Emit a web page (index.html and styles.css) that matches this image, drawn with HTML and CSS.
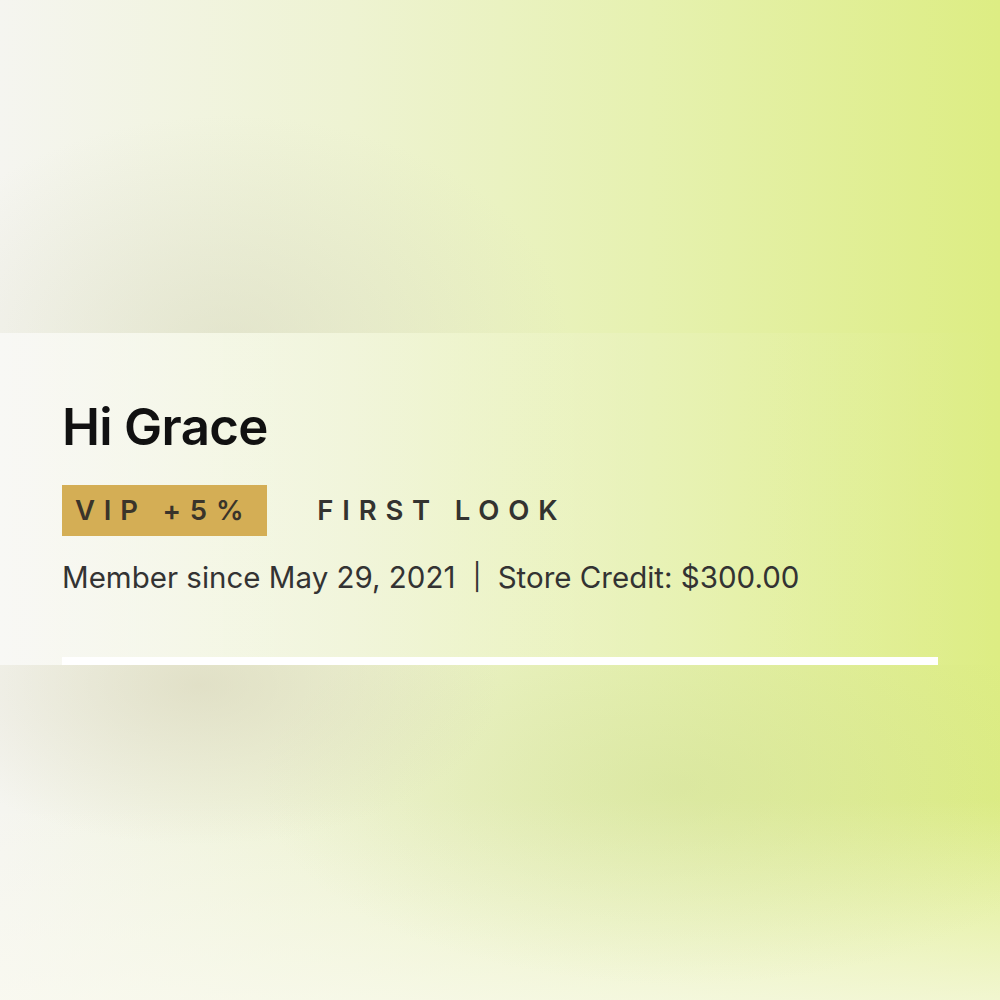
FILE: index.html
```html
<!DOCTYPE html>
<html lang="en">
<head>
<meta charset="utf-8">
<title>Account</title>
<link rel="stylesheet" href="styles.css">
</head>
<body>
<div class="page">
  <div class="backdrop-top"></div>
  <section class="panel">
    <div class="panel-inner">
      <h1 class="greeting">Hi Grace</h1>
      <div class="tags">
        <span class="tag tag-vip">VIP +5%</span>
        <span class="tag">FIRST LOOK</span>
      </div>
      <p class="meta">Member since May 29, 2021 <span class="sep">|</span> Store Credit: $300.00</p>
    </div>
  </section>
  <div class="backdrop-bottom"></div>
</div>
</body>
</html>
```

FILE: styles.css
```css
html, body {
  margin: 0;
  padding: 0;
}

body {
  font-family: Inter, "Liberation Sans", Arial, sans-serif;
}

.page {
  width: 1000px;
  height: 1000px;
  display: flex;
  flex-direction: column;
  background: linear-gradient(90deg, #f5f5f0 0%, #eef3d2 35%, #e6f1b0 65%, #dded83 100%);
  overflow: hidden;
}

.backdrop-top {
  height: 333px;
  flex: none;
  background:
    radial-gradient(ellipse 340px 230px at 230px 345px, rgba(208, 208, 182, 0.42), rgba(208, 208, 182, 0) 100%);
}

.panel {
  height: 332px;
  flex: none;
  padding: 0 62px;
  box-sizing: border-box;
  background: linear-gradient(90deg, rgba(255, 255, 255, 0.35) 0%, rgba(255, 255, 255, 0.15) 45%, rgba(255, 255, 255, 0) 100%);
}

.panel-inner {
  height: 100%;
  box-sizing: border-box;
  padding-top: 64px;
  border-bottom: 8px solid #ffffff;
  display: flex;
  flex-direction: column;
}

.greeting {
  margin: 0;
  font-size: 51px;
  line-height: 60px;
  font-weight: 600;
  color: #111111;
  letter-spacing: -0.7px;
}

.tags {
  margin-top: 28px;
  display: flex;
  align-items: center;
  gap: 50px;
}

.tag {
  font-size: 27.5px;
  font-weight: 600;
  letter-spacing: 0.32em;
  color: #333330;
  line-height: 51px;
}

.tag-vip {
  background: #d4ae55;
  padding: 0 15px 0 13px;
  color: #3a342a;
}

.meta {
  margin: 23px 0 0;
  font-size: 29.5px;
  line-height: 36px;
  color: #333333;
  letter-spacing: 0;
}

.sep {
  padding: 0 8px 0 9px;
  font-size: 26px;
  position: relative;
  top: -2px;
}

.backdrop-bottom {
  flex: 1;
  background:
    radial-gradient(ellipse 300px 160px at 200px 20px, rgba(205, 200, 170, 0.45), rgba(205, 200, 170, 0) 100%),
    radial-gradient(ellipse 420px 200px at 680px 120px, rgba(200, 215, 140, 0.35), rgba(200, 215, 140, 0) 100%),
    linear-gradient(180deg, rgba(255, 255, 255, 0) 40%, rgba(250, 250, 240, 0.7) 100%);
}
```
